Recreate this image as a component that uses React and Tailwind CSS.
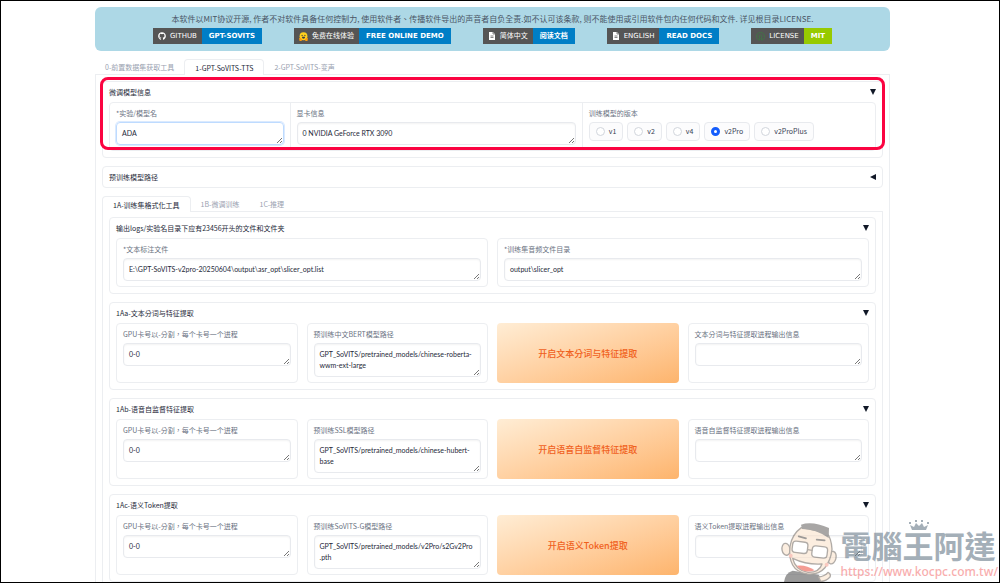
import { useState } from 'react';
import { FaGithub } from 'react-icons/fa';

const BADGES = [
  { icon: 'github', label: 'GITHUB', value: 'GPT-SOVITS', color: 'bg-[#007ec6]' },
  { icon: 'hug', label: '免费在线体验', value: 'FREE ONLINE DEMO', color: 'bg-[#007ec6]' },
  { icon: 'doc', label: '简体中文', value: '阅读文档', color: 'bg-[#007ec6]' },
  { icon: 'doc', label: 'ENGLISH', value: 'READ DOCS', color: 'bg-[#007ec6]' },
  { icon: 'osi', label: 'LICENSE', value: 'MIT', color: 'bg-[#97ca00]' },
];

const VERSIONS = ['v1', 'v2', 'v4', 'v2Pro', 'v2ProPlus'];

const STEPS = [
  {
    id: 'aa',
    title: '1Aa-文本分词与特征提取',
    pathLabel: '预训练中文BERT模型路径',
    path: 'GPT_SoVITS/pretrained_models/chinese-roberta-wwm-ext-large',
    button: '开启文本分词与特征提取',
    outLabel: '文本分词与特征提取进程输出信息',
  },
  {
    id: 'ab',
    title: '1Ab-语音自监督特征提取',
    pathLabel: '预训练SSL模型路径',
    path: 'GPT_SoVITS/pretrained_models/chinese-hubert-base',
    button: '开启语音自监督特征提取',
    outLabel: '语音自监督特征提取进程输出信息',
  },
  {
    id: 'ac',
    title: '1Ac-语义Token提取',
    pathLabel: '预训练SoVITS-G模型路径',
    path: 'GPT_SoVITS/pretrained_models/v2Pro/s2Gv2Pro.pth',
    button: '开启语义Token提取',
    outLabel: '语义Token提取进程输出信息',
  },
];

const BadgeIcon = ({ name }) => {
  if (name === 'github') return <FaGithub className="size-2 text-white" />;
  if (name === 'doc') {
    return (
      <svg viewBox="0 0 16 16" className="size-2">
        <path d="M2 0h8l4 4v12H2z" fill="#fff" />
        <path d="M10 0v4h4M5 8h6M5 11h6" stroke="#555" strokeWidth="1.4" fill="none" />
      </svg>
    );
  }
  if (name === 'hug') {
    return (
      <svg viewBox="0 0 16 16" className="size-[9px]">
        <circle cx="8" cy="7.5" r="7" fill="#ffd21e" />
        <circle cx="5.5" cy="6" r="1.1" fill="#3a3b45" />
        <circle cx="10.5" cy="6" r="1.1" fill="#3a3b45" />
        <path d="M5 8.5h6q-.5 3.5-3 3.5t-3-3.5z" fill="#3a3b45" />
        <path d="M0 11l3-1 3 4-2 2H1zM16 11l-3-1-3 4 2 2h3z" fill="#ff9d0b" />
      </svg>
    );
  }
  return (
    <svg viewBox="0 0 16 16" className="size-[9px]">
      <path
        d="M5.8 14.8a7.2 7.2 0 1 1 4.4 0L8.8 10.5a2.6 2.6 0 1 0-1.6 0z"
        fill="none"
        stroke="#3f7a43"
        strokeWidth="1.4"
      />
    </svg>
  );
};

const Badge = ({ icon, label, value, color }) => (
  <a href="#" className="flex h-4 items-stretch font-['DejaVu_Sans','Noto_Sans_CJK_SC',sans-serif] text-[7px] leading-4 text-white">
    <span className="flex items-center gap-1 bg-[#555] px-[5px]">
      <BadgeIcon name={icon} />
      {label}
    </span>
    <span className={`px-[7px] font-bold ${color}`}>{value}</span>
  </a>
);

const Tabs = ({ items, active, onChange }) => (
  <div role="tablist" className="relative -mb-px flex h-4">
    {items.map((item, i) => (
      <button
        key={item}
        role="tab"
        aria-selected={i === active}
        onClick={() => onChange(i)}
        className={
          i === active
            ? 'rounded-t border border-b-0 border-[#eceef1] bg-white px-[10px] leading-[14px] text-gray-800'
            : 'px-[10px] text-gray-400'
        }
      >
        {item}
      </button>
    ))}
  </div>
);

const Accordion = ({ title, open = true, children }) => {
  const [isOpen, setIsOpen] = useState(open);
  return (
    <section className="rounded border border-[#eceef1] px-[6px]">
      <button
        onClick={() => setIsOpen(!isOpen)}
        aria-expanded={isOpen}
        className="flex h-5 w-full items-center justify-between text-gray-800"
      >
        <span>{title}</span>
        <svg viewBox="0 0 6 6" className={`size-[6px] ${isOpen ? '' : 'rotate-90'}`}>
          <path d="M0 0h6L3 6z" fill="#111827" />
        </svg>
      </button>
      {isOpen && <div className="pb-[6px]">{children}</div>}
    </section>
  );
};

const TextField = ({ id, label, value = '', rows = 1, focused = false, framed = true }) => (
  <div className={framed ? 'min-w-0 rounded border border-[#eceef1] px-[6px] py-[5px]' : 'min-w-0 px-[6px] py-[5px]'}>
    <label htmlFor={id} className="mb-[3px] block text-gray-500">{label}</label>
    <div className="relative">
      <textarea
        id={id}
        rows={rows}
        defaultValue={value}
        className={`block w-full resize-none overflow-hidden rounded border py-[5px] pr-[7px] pl-[5px] font-['Lato','Noto_Sans_CJK_TC',sans-serif] leading-[11px] break-words text-gray-800 outline-none ${
          focused
            ? 'border-blue-200 shadow-[0_0_0_1px_#dbeafe]'
            : 'border-[#e8eaee] shadow-[inset_0_1px_2px_#0000000d]'
        }`}
      />
      <svg viewBox="0 0 5 5" className="pointer-events-none absolute right-[2px] bottom-[2px] size-[5px]">
        <path d="M0 5L5 0M3 5L5 3" stroke="#555" strokeWidth="0.8" />
      </svg>
    </div>
  </div>
);

const VersionPicker = () => {
  const [version, setVersion] = useState('v2Pro');
  return (
    <fieldset className="min-w-0 px-[6px] py-[5px]">
      <legend className="float-left mb-[3px] w-full text-gray-500">训练模型的版本</legend>
      <div className="clear-both flex gap-1">
        {VERSIONS.map((v) => (
          <label
            key={v}
            className="flex h-[19px] items-center gap-1 rounded border border-[#e8eaee] bg-gray-50/50 px-[6px] text-gray-700"
          >
            <input
              type="radio"
              name="version"
              checked={version === v}
              onChange={() => setVersion(v)}
              className="size-[9px] appearance-none rounded-full border border-gray-300 bg-white checked:border-[3px] checked:border-blue-600"
            />
            {v}
          </label>
        ))}
      </div>
    </fieldset>
  );
};

const Mascot = () => (
  <svg viewBox="0 0 192 201" className="h-[67px] w-16" stroke="#7d746c" strokeWidth="4" strokeLinejoin="round" strokeLinecap="round">
    <path d="M24 201q4-28 26-34l78 12 14 22z" fill="#5a5a5a" stroke="none" />
    <path d="M128 186q18-2 28-14 10 4 6 14-10 12-28 13z" fill="#fbe3cc" />
    <ellipse cx="30" cy="103" rx="12" ry="18" fill="#fbe3cc" transform="rotate(-10 30 103)" />
    <ellipse cx="168" cy="128" rx="12" ry="19" fill="#fbe3cc" transform="rotate(14 168 128)" />
    <path d="M76 38Q48 58 42 94q-4 34 8 56 12 22 44 27 34 3 52-18 18-22 22-56-2-34-16-50z" fill="#fbe3cc" />
    <path d="M78 42l-3-13q34-12 84 10l-1 30Q120 42 78 42z" fill="#6f6c6a" stroke="none" />
    <path d="M68 64l22 6M122 74l24 2" stroke="#5f5a56" strokeWidth="5" />
    <circle cx="44" cy="122" r="6" fill="#f6a596" stroke="none" />
    <circle cx="152" cy="149" r="6" fill="#f6a596" stroke="none" />
    <rect x="49" y="80" width="46" height="34" rx="10" fill="#fff" transform="rotate(7 72 97)" />
    <rect x="108" y="94" width="46" height="34" rx="10" fill="#fff" transform="rotate(7 131 111)" />
    <path d="M95 104l13 2" />
    <path d="M50 130q42 20 88 17-8 26-42 25-38-6-46-42z" fill="#fff" />
    <path d="M62 152q28-4 54 14-32 12-54-14z" fill="#ee5b4d" stroke="none" />
  </svg>
);

const Watermark = () => (
  <div className="pointer-events-none absolute right-px bottom-0 flex items-end opacity-60">
    <Mascot />
    <div className="relative">
      <svg viewBox="0 0 22 12" className="absolute -top-2 left-1/2 h-3 w-[22px] -translate-x-1/2">
        <path d="M4 10L2 5l4 2 2-4 3 3 3-3 2 4 4-2-2 5z" fill="#697b8a" />
        <path d="M1 2h2v2H1zM7 0h2v2H7zM13 0h2v2h-2zM19 2h2v2h-2z" fill="#697b8a" />
      </svg>
      <div className="font-['Noto_Sans_CJK_TC',sans-serif] text-[31px] leading-[34px] font-bold text-[#697b8a]">電腦王阿達</div>
      <div className="font-['Noto_Sans',sans-serif] text-[12px] leading-5 font-medium text-[#f57878]">https://www.kocpc.com.tw/</div>
    </div>
  </div>
);

export default function App() {
  const [mainTab, setMainTab] = useState(1);
  const [subTab, setSubTab] = useState(0);

  return (
    <div className="relative h-screen overflow-hidden border border-black bg-white pr-[15px] font-['Noto_Sans_CJK_TC',sans-serif] text-[7px] leading-[11px]">
      <main className="mx-auto flex max-w-[795px] flex-col gap-2 pt-[6px]">
        <header className="flex h-11 flex-col items-center rounded-md bg-[lightblue] pt-[6px] text-gray-600">
          <p className="mb-[3px] text-[8px] leading-3 whitespace-nowrap">
            本软件以MIT协议开源, 作者不对软件具备任何控制力, 使用软件者、传播软件导出的声音者自负全责.如不认可该条款, 则不能使用或引用软件包内任何代码和文件. 详见根目录LICENSE.
          </p>
          <div className="flex gap-8">
            {BADGES.map((b) => (
              <Badge key={b.label} {...b} />
            ))}
          </div>
        </header>

        <div>
          <Tabs items={['0-前置数据集获取工具', '1-GPT-SoVITS-TTS', '2-GPT-SoVITS-变声']} active={mainTab} onChange={setMainTab} />
          <div className="flex flex-col gap-2 border border-[#eceef1] px-[6px] pt-[6px]">
            <div className="relative">
              <Accordion title="微调模型信息">
                <div className="grid grid-cols-[181fr_293fr_293fr] divide-x divide-[#eceef1] rounded border border-[#eceef1]">
                  <TextField id="name" label="*实验/模型名" value="ADA" focused framed={false} />
                  <TextField id="gpu" label="显卡信息" value="0 NVIDIA GeForce RTX 3090" framed={false} />
                  <VersionPicker />
                </div>
              </Accordion>
              {/* highlight frame round the model settings */}
              <div className="pointer-events-none absolute -inset-x-[2px] -top-1 bottom-2 rounded-lg border-[3px] border-[#fb0441]" />
            </div>

            <Accordion title="预训练模型路径" open={false} />

            <div>
              <Tabs items={['1A-训练集格式化工具', '1B-微调训练', '1C-推理']} active={subTab} onChange={setSubTab} />
              <div className="flex flex-col gap-2 border border-[#eceef1] px-[6px] pt-[5px]">
                <Accordion title="输出logs/实验名目录下应有23456开头的文件和文件夹">
                  <div className="grid grid-cols-2 gap-[9px]">
                    <TextField id="list" label="*文本标注文件" value="E:\GPT-SoVITS-v2pro-20250604\output\asr_opt\slicer_opt.list" />
                    <TextField id="wavs" label="*训练集音频文件目录" value="output\slicer_opt" />
                  </div>
                </Accordion>

                {STEPS.map((s) => (
                  <Accordion key={s.id} title={s.title}>
                    <div className="grid grid-cols-4 gap-[9px]">
                      <TextField id={`${s.id}-gpu`} label="GPU卡号以-分割，每个卡号一个进程" value="0-0" />
                      <TextField id={`${s.id}-path`} label={s.pathLabel} value={s.path} rows={2} />
                      <button className="rounded bg-linear-to-br from-[#ffedd5] to-[#fdb46c] text-[9px] font-medium text-[#f0601c]">
                        {s.button}
                      </button>
                      <TextField id={`${s.id}-out`} label={s.outLabel} />
                    </div>
                  </Accordion>
                ))}
              </div>
            </div>
          </div>
        </div>
      </main>
      <Watermark />
    </div>
  );
}
